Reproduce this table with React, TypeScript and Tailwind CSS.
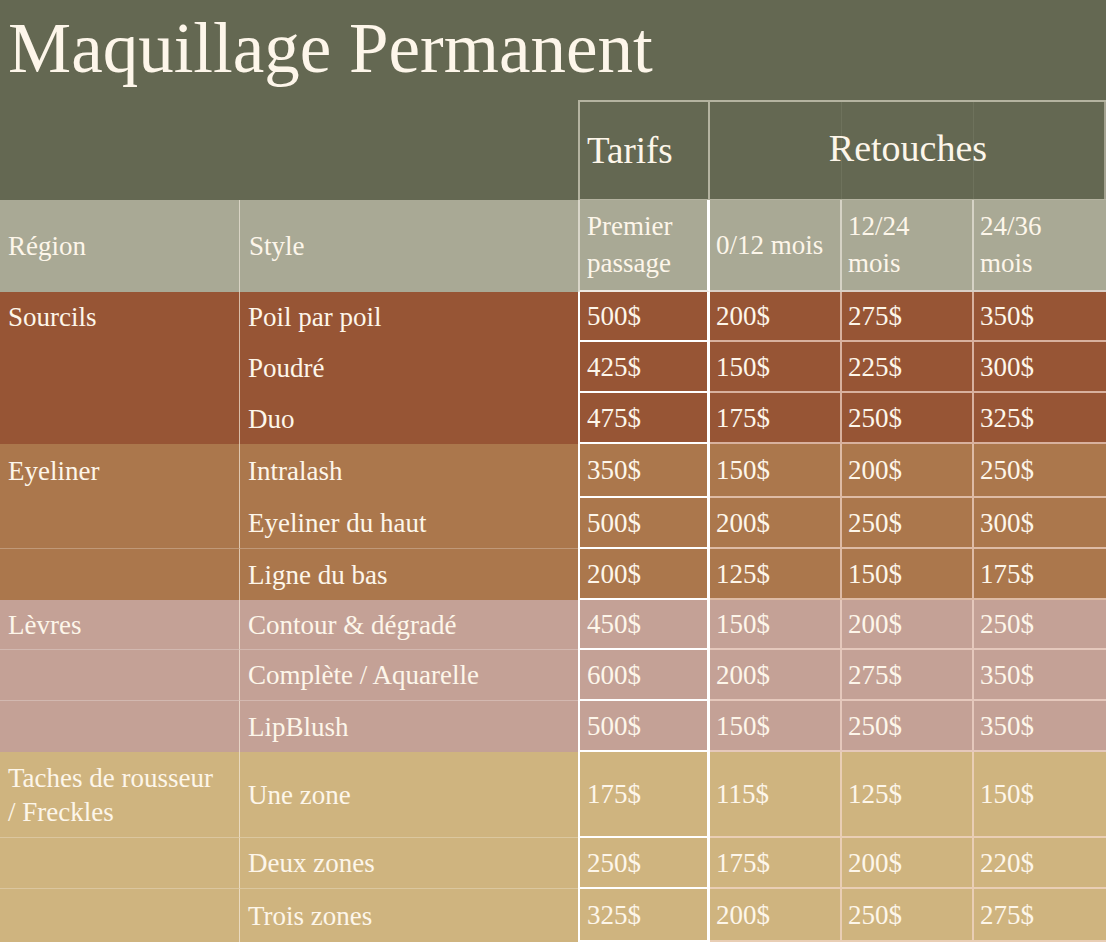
import React from "react";

type Row = {
  bg: string;
  h: string;
  region?: React.ReactNode;
  style: string;
  prices: [string, string, string, string];
  line: boolean;
};

const rows: Row[] = [
  { bg: "bg-[#975535]", h: "h-[50px]", region: "Sourcils", style: "Poil par poil", prices: ["500$", "200$", "275$", "350$"], line: false },
  { bg: "bg-[#975535]", h: "h-[51px]", style: "Poudré", prices: ["425$", "150$", "225$", "300$"], line: false },
  { bg: "bg-[#975535]", h: "h-[51px]", style: "Duo", prices: ["475$", "175$", "250$", "325$"], line: false },
  { bg: "bg-[#ab774c]", h: "h-[54px]", region: "Eyeliner", style: "Intralash", prices: ["350$", "150$", "200$", "250$"], line: false },
  { bg: "bg-[#ab774c]", h: "h-[51px]", style: "Eyeliner du haut", prices: ["500$", "200$", "250$", "300$"], line: true },
  { bg: "bg-[#ab774c]", h: "h-[51px]", style: "Ligne du bas", prices: ["200$", "125$", "150$", "175$"], line: false },
  { bg: "bg-[#c4a196]", h: "h-[50px]", region: "Lèvres", style: "Contour & dégradé", prices: ["450$", "150$", "200$", "250$"], line: true },
  { bg: "bg-[#c4a196]", h: "h-[51px]", style: "Complète / Aquarelle", prices: ["600$", "200$", "275$", "350$"], line: true },
  { bg: "bg-[#c4a196]", h: "h-[51px]", style: "LipBlush", prices: ["500$", "150$", "250$", "350$"], line: false },
  {
    bg: "bg-[#cfb47f]",
    h: "h-[86px]",
    region: (
      <>
        Taches de rousseur
        <br />/ Freckles
      </>
    ),
    style: "Une zone",
    prices: ["175$", "115$", "125$", "150$"],
    line: true,
  },
  { bg: "bg-[#cfb47f]", h: "h-[51px]", style: "Deux zones", prices: ["250$", "175$", "200$", "220$"], line: true },
  { bg: "bg-[#cfb47f]", h: "h-[53px]", style: "Trois zones", prices: ["325$", "200$", "250$", "275$"], line: false },
];

const cols = "grid grid-cols-[240px_338px_132px_132px_132px_132px]";

export default function App() {
  return (
    <div
      className="w-[1106px] h-[942px] overflow-hidden bg-[#646852] text-[#fdf6ea]"
      style={{ fontFamily: '"Liberation Serif", "Times New Roman", serif' }}
    >
      {/* Title */}
      <div className="h-[100px] pl-[8px] pt-[13px]">
        <h1 className="text-[71px] leading-none font-normal">Maquillage Permanent</h1>
      </div>

      {/* Header row 1 */}
      <div className={`${cols} h-[100px]`}>
        <div className="col-span-2" />
        <div className="flex items-center pl-[7px] border-t-2 border-l-2 border-r-2 border-b border-[#b4b3a0] text-[37px]">
          Tarifs
        </div>
        <div className="col-span-3 grid grid-cols-3 border-t-2 border-b border-[#b4b3a0]">
          <div className="col-start-1 row-start-1 border-r border-[#6e725c]" />
          <div className="col-start-2 row-start-1 border-r border-[#6e725c]" />
          <div className="col-start-3 row-start-1 border-r-2 border-[#a3a290]" />
          <div className="col-start-1 col-span-3 row-start-1 flex items-center justify-center text-[38px] pb-[4px]">
            Retouches
          </div>
        </div>
      </div>

      {/* Header row 2 */}
      <div className={`${cols} h-[92px] bg-[#a9a995] text-[27px] leading-[37px]`}>
        <div className="flex items-center pl-2 border-r border-[#ece6d8]/70">Région</div>
        <div className="flex items-center pl-[9px]">Style</div>
        <div className="flex items-center pl-[7px] border-l-2 border-[#d9d6c9] border-r-[3px] border-r-white border-b-2 border-b-[#eee9e2]">
          Premier
          <br />
          passage
        </div>
        <div className="flex items-center pl-[6px] border-r-2 border-[#d6d3c6] border-b-2 border-b-[#d9cfc6]">0/12 mois</div>
        <div className="flex items-center pl-[6px] border-r-2 border-[#d6d3c6] border-b-2 border-b-[#d9cfc6]">
          12/24
          <br />
          mois
        </div>
        <div className="flex items-center pl-[6px] border-b-2 border-b-[#d9cfc6]">
          24/36
          <br />
          mois
        </div>
      </div>

      {/* Data rows */}
      {rows.map((r, i) => (
        <div key={i} className={`${cols} ${r.h} ${r.bg} text-[27px] leading-[34px]`}>
          <div className={`flex items-center pl-2 border-r border-[#f5e9da]/70 ${r.line ? "border-b border-b-white/25" : ""}`}>
            <span>{r.region}</span>
          </div>
          <div className={`flex items-center pl-[8px] ${r.line ? "border-b border-b-white/25" : ""}`}>{r.style}</div>
          <div className="flex items-center pl-[7px] border-l-2 border-white border-r-[3px] border-b-2">{r.prices[0]}</div>
          <div className="flex items-center pl-[6px] border-r-2 border-b-2 border-[#f3d9cc]/70">{r.prices[1]}</div>
          <div className="flex items-center pl-[6px] border-r-2 border-b-2 border-[#f3d9cc]/70">{r.prices[2]}</div>
          <div className="flex items-center pl-[6px] border-b-2 border-[#f3d9cc]/70">{r.prices[3]}</div>
        </div>
      ))}
    </div>
  );
}
